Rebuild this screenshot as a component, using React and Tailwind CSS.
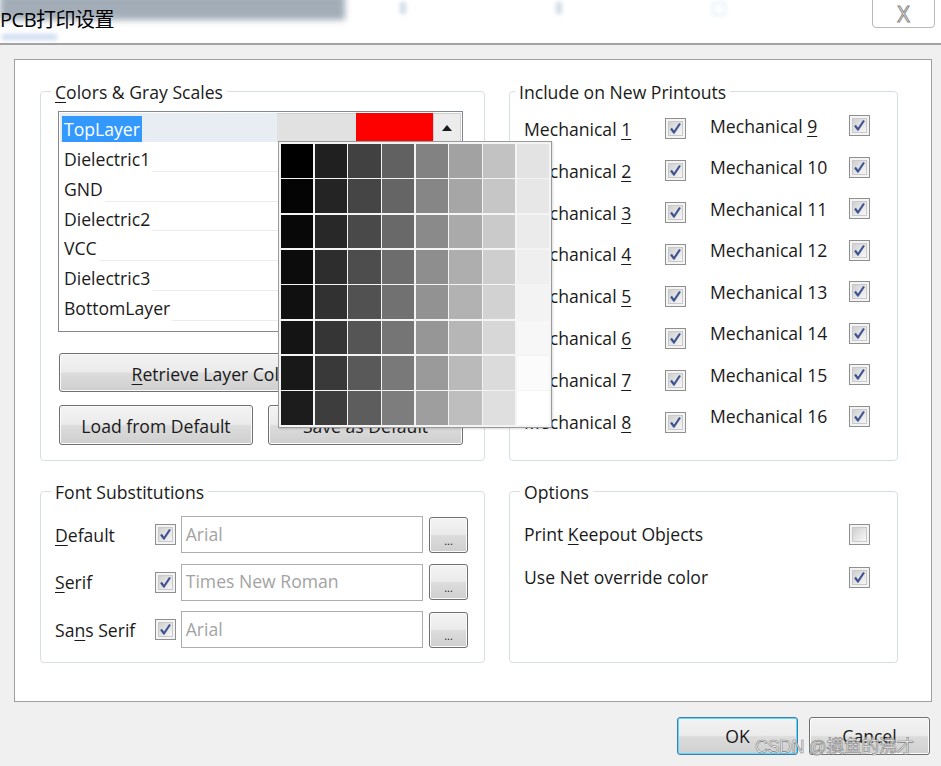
import React from "react";

const FONT = "font-['Open_Sans','Noto_Sans','Noto_Sans_CJK_SC',sans-serif]";
const GRAD = "bg-[linear-gradient(to_bottom,#f3f3f3_0%,#ebebeb_48%,#dcdcdc_52%,#cfcfcf_100%)]";
const BTN = `flex items-center justify-center rounded-[3px] border border-[#707070] ${GRAD} shadow-[inset_0_0_0_1px_#fbfbfb] text-[#1a1a1a]`;
const OKBTN = `flex items-center justify-center rounded-[3px] border border-[#3c7fb1] ${GRAD} shadow-[inset_0_0_0_1px_#5fd8fb] text-[#1a1a1a]`;

const LAYERS = ["Dielectric1", "GND", "Dielectric2", "VCC", "Dielectric3", "BottomLayer"];

function gray(r, c) {
  const v = Math.round(((c * 8 + r) * 255) / 63);
  return `rgb(${v},${v},${v})`;
}

function Check({ checked }) {
  return (
    <span className="flex h-[21px] w-[21px] shrink-0 items-center justify-center border border-[#8e8f8f] bg-[#f4f4f4] p-[2px]">
      <span className="flex h-full w-full items-center justify-center border border-[#c9c9c9] bg-[linear-gradient(135deg,#d0d0d0,#f7f7f7)]">
        {checked && (
          <svg width="13" height="13" viewBox="0 0 13 13">
            <path d="M2 6.5 L5 10.5 L11 1.5" fill="none" stroke="#3f5491" strokeWidth="2.2" strokeLinejoin="round" />
          </svg>
        )}
      </span>
    </span>
  );
}

function Group({ title, legendLeft, className, children }) {
  return (
    <div className={`relative rounded-[4px] border border-[#d5dfe5] ${className || ""}`}>
      <span className={`absolute top-[-12px] bg-white px-[4px] leading-[24px] ${legendLeft}`}>{title}</span>
      {children}
    </div>
  );
}

function Mech({ n, u }) {
  return (
    <span>
      Mechanical {u ? <u className="underline-offset-[3px]">{n}</u> : n}
    </span>
  );
}

export default function App() {
  const col1 = [1, 2, 3, 4, 5, 6, 7, 8];
  const col2 = [9, 10, 11, 12, 13, 14, 15, 16];
  return (
    <div className={`relative h-[766px] w-[941px] overflow-hidden bg-[#f0f0f0] text-[17.6px] text-[#1a1a1a] ${FONT}`}>
      {/* title band */}
      <div className="relative h-[45px] border-b-2 border-[#a3a3a3] bg-white">
        <div className="absolute left-0 top-[-6px] h-[26px] w-[345px] bg-[#8b99a7] opacity-80 blur-[3px]" />
        <div className="absolute left-[400px] top-[2px] flex gap-[150px] opacity-30 blur-[2px]">
          <span className="h-[12px] w-[6px] bg-[#6a88b0]" />
          <span className="h-[12px] w-[6px] bg-[#6a88b0]" />
          <span className="h-[14px] w-[14px] rounded-[3px] border-2 border-[#9ec6e8]" />
          <span className="h-[14px] w-[14px] rounded-[3px] border-2 border-[#9ec6e8]" />
          <span className="h-[14px] w-[14px] rounded-[3px] border-2 border-[#9ec6e8]" />
        </div>
        <div className="absolute left-[2px] top-[34px] h-[6px] w-[55px] bg-[#9fbbe0] opacity-50 blur-[2px]" />
        <div className="relative pl-0 pt-[5px] text-[20px] leading-[30px] tracking-[-0.5px] text-black">PCB打印设置</div>
        <div className="absolute right-[6px] top-[-1px] flex h-[29px] w-[63px] items-center justify-center rounded-b-[4px] border border-[#b9b9b9] bg-white pt-[1px] text-[21px] leading-[24px] text-white [-webkit-text-stroke:1px_#8a8a8a]">
          X
        </div>
      </div>

      {/* main panel */}
      <div className="ml-[14px] mt-[14px] h-[643px] w-[918px] border border-[#a0a0a0] bg-white pl-[25px] pt-[31px]">
        <div className="grid grid-cols-[445px_389px] grid-rows-[370px_172px] gap-x-[24px] gap-y-[30px]">
          {/* Colors & Gray Scales */}
          <Group title={<span><u className="underline-offset-[3px]">C</u>olors &amp; Gray Scales</span>} legendLeft="left-[10px]" className="z-10 pl-[17px] pr-[21px] pt-[19px]">
            <div className="relative h-[221px] border border-[#828790] bg-white">
              <div className="px-[1px] pt-[1px]">
                <div className="flex h-[29px] items-stretch">
                  <div className="flex w-[218px] items-center bg-[#e8edf4] pl-[2px] pt-[3px]">
                    <span className="bg-[#3399ff] px-[2px] leading-[26px] text-white">TopLayer</span>
                  </div>
                  <div className="w-[79px] border-t border-[#cfcfcf] bg-[#e1e1e1]" />
                  <div className="w-[77px] bg-[#ff0000]" />
                  <div className="flex w-[28px] items-center justify-center border border-[#cfcfcf] bg-[#ececec]">
                    <svg width="12" height="8" viewBox="0 0 12 8">
                      <path d="M6 1 L11 7 L1 7 Z" fill="#1a1a1a" />
                    </svg>
                  </div>
                </div>
                {LAYERS.map((l) => (
                  <div key={l} className="flex h-[29.8px] items-stretch">
                    <span className="pl-[4px] pr-[2px] pt-[2px] leading-[30px]">{l}</span>
                    <div className="flex-1 border-b border-[#ececec]" />
                  </div>
                ))}
              </div>
              {/* gray scale popup */}
              <div className="absolute left-[219px] top-[29px] h-[287px] w-[274px] border border-[#9a9a9a] bg-[#f4f4f4] p-[2px] shadow-[1px_1px_2px_rgba(0,0,0,0.15)]">
                <div className="grid h-full w-full grid-cols-8 grid-rows-8 gap-[1.5px]">
                  {Array.from({ length: 64 }).map((_, i) => {
                    const r = Math.floor(i / 8);
                    const c = i % 8;
                    return <div key={i} style={{ background: gray(r, c) }} />;
                  })}
                </div>
              </div>
            </div>
            <div className="-z-10 relative mt-[21px] flex flex-col gap-[13px] pl-[1px]">
              <div className={`${BTN} h-[39px] w-[404px] pt-[3px]`}>
                <span>
                  <u className="underline-offset-[3px]">R</u>etrieve Layer Colors From PCB
                </span>
              </div>
              <div className="flex gap-[15px]">
                <div className={`${BTN} h-[40px] w-[194px] pt-[2px]`}>Load from Default</div>
                <div className={`${BTN} h-[40px] w-[195px] pt-[2px]`}>Save as Default</div>
              </div>
            </div>
          </Group>

          {/* Include on New Printouts */}
          <Group title="Include on New Printouts" legendLeft="left-[5px]" className="flex gap-[24px] pl-[14px]">
            <div className="flex flex-col pt-[16px]">
              {col1.map((n) => (
                <div key={n} className="flex h-[41.9px] w-[162px] items-center justify-between">
                  <Mech n={n} u />
                  <Check checked />
                </div>
              ))}
            </div>
            <div className="flex flex-col pt-[13px]">
              {col2.map((n) => (
                <div key={n} className="flex h-[41.5px] w-[160px] items-center justify-between">
                  <Mech n={n} u={n === 9} />
                  <Check checked />
                </div>
              ))}
            </div>
          </Group>

          {/* Font Substitutions */}
          <Group title="Font Substitutions" legendLeft="left-[10px]" className="pl-[14px] pr-[16px] pt-[19px]">
            {[
              ["D", "efault", "Arial", null],
              ["S", "erif", "Times New Roman", null],
              [null, null, "Arial", true],
            ].map(([u, rest, val, sans], i) => (
              <div key={i} className="flex h-[47.5px] items-center">
                <span className="w-[100px]">
                  {sans ? (
                    <span>
                      Sa<u className="underline-offset-[3px]">n</u>s Serif
                    </span>
                  ) : (
                    <span>
                      <u className="underline-offset-[3px]">{u}</u>
                      {rest}
                    </span>
                  )}
                </span>
                <Check checked />
                <div className="ml-[5px] flex h-[37px] w-[243px] items-center border border-[#abadb3] pb-[2px] pl-[4px] text-[#a3a3a3]">{val}</div>
                <div className={`${BTN} ml-[6px] h-[36px] w-[39px] items-end pb-[6px] text-[11px] leading-[11px]`}>...</div>
              </div>
            ))}
          </Group>

          {/* Options */}
          <Group title="Options" legendLeft="left-[10px]" className="pl-[14px] pr-[27px] pt-[21px]">
            <div className="flex h-[43px] items-center justify-between">
              <span>
                Print <u className="underline-offset-[3px]">K</u>eepout Objects
              </span>
              <Check />
            </div>
            <div className="flex h-[43px] items-center justify-between">
              <span>Use Net override color</span>
              <Check checked />
            </div>
          </Group>
        </div>
      </div>

      {/* dialog buttons */}
      <div className="mt-[15px] flex justify-end gap-[11px] pr-[11px]">
        <div className={`${OKBTN} h-[38px] w-[121px]`}>OK</div>
        <div className={`${BTN} h-[38px] w-[121px]`}>Cancel</div>
      </div>

      {/* watermark */}
      <div className="absolute left-[755px] top-[734px] text-[18px] tracking-[-0.5px] text-white/90 [-webkit-text-stroke:0.6px_#7a7a7a] font-['Liberation_Sans','Noto_Sans_CJK_SC',sans-serif]">
        CSDN @摸鱼的沸才
      </div>
    </div>
  );
}
